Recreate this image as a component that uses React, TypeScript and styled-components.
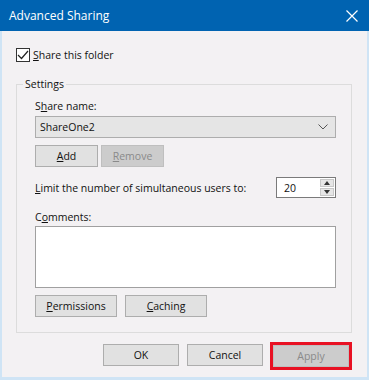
import React from "react";
import styled, { createGlobalStyle } from "styled-components";

const Global = createGlobalStyle`
  html, body { margin: 0; padding: 0; background: #ffffff; }
  body { font-family: "Open Sans", "Liberation Sans", Arial, sans-serif; font-size: 10.5px; color: #111; }
  * { box-sizing: border-box; }
`;

const Window = styled.div`
  width: 369px;
  height: 380px;
  display: flex;
  flex-direction: column;
  background: #f3f1f3;
  border-left: 2px solid #cfe4f5;
  border-right: 2px solid #cfe4f5;
  border-bottom: 3px solid #cfe4f5;
`;

const TitleBar = styled.div`
  height: 31px;
  margin: 0 -2px;
  background: #0063b1;
  color: #fff;
  display: flex;
  align-items: center;
  justify-content: space-between;
  padding: 0 11px 0 9px;
  font-size: 12px;
  flex-shrink: 0;
`;

const Body = styled.div`
  flex: 1;
  display: flex;
  flex-direction: column;
  padding: 17px 15px 0 14px;
`;

const CheckRow = styled.label`
  display: flex;
  align-items: center;
  gap: 3px;
  height: 14px;
`;

const CheckBox = styled.span`
  width: 14px;
  height: 14px;
  border: 1px solid #333;
  background: #fff;
  display: flex;
  align-items: center;
  justify-content: center;
`;

const U = styled.span`
  text-decoration: underline;
  text-underline-offset: 1px;
`;

const Group = styled.fieldset`
  margin: 16px 0 0 0;
  padding: 9px 15px 15px 18px;
  border: 1px solid #dcdcdc;
  display: flex;
  flex-direction: column;
  min-width: 0;
`;

const Legend = styled.legend`
  padding: 0 2px;
  margin-left: -12px;
  line-height: 12px;
`;

const Label = styled.div<{ $mt?: number }>`
  margin-top: ${(p) => p.$mt ?? 0}px;
  line-height: 15px;
`;

const Combo = styled.div`
  margin-top: 2px;
  height: 22px;
  background: #e5e5e5;
  border: 1px solid #adadad;
  display: flex;
  align-items: center;
  justify-content: space-between;
  padding: 0 7px 0 4px;
`;

const Row = styled.div<{ $mt?: number; $gap?: number }>`
  display: flex;
  align-items: center;
  margin-top: ${(p) => p.$mt ?? 0}px;
  gap: ${(p) => p.$gap ?? 0}px;
`;

const Button = styled.div<{ $w: number; $disabled?: boolean }>`
  width: ${(p) => p.$w}px;
  height: 22px;
  display: flex;
  align-items: center;
  justify-content: center;
  background: ${(p) => (p.$disabled ? "#cccccc" : "#e1e1e1")};
  border: 1px solid ${(p) => (p.$disabled ? "#bfbfbf" : "#adadad")};
  color: ${(p) => (p.$disabled ? "#8a8a8a" : "#111")};
`;

const Spin = styled.div`
  margin-left: auto;
  width: 60px;
  height: 21px;
  border: 1px solid #7a7a7a;
  background: #fff;
  display: flex;
`;

const SpinText = styled.div`
  flex: 1;
  padding-left: 7px;
  display: flex;
  align-items: center;
`;

const SpinArrows = styled.div`
  width: 16px;
  display: flex;
  flex-direction: column;
  padding: 1px;
  gap: 1px;
`;

const SpinBtn = styled.div`
  flex: 1;
  background: #e6e6e6;
  border: 1px solid #c8c8c8;
  display: flex;
  align-items: center;
  justify-content: center;
`;

const TextArea = styled.div`
  margin-top: 1px;
  height: 62px;
  background: #fff;
  border: 1px solid #a0a0a0;
`;

const Footer = styled.div`
  display: flex;
  justify-content: flex-end;
  gap: 8px;
  margin-top: 11px;
  padding-right: 2px;
`;

const Highlight = styled.div`
  border: 3px solid #e81123;
  margin: -2px -2px -2px -1px;
  display: flex;
`;

export default function App() {
  return (
    <>
      <Global />
      <Window>
        <TitleBar>
          <span>Advanced Sharing</span>
          <svg width="12" height="12" viewBox="0 0 12 12">
            <path d="M0.5 0.5 L11.5 11.5 M11.5 0.5 L0.5 11.5" stroke="#fff" strokeWidth="1.2" />
          </svg>
        </TitleBar>
        <Body>
          <CheckRow>
            <CheckBox>
              <svg width="12" height="10" viewBox="0 0 12 10">
                <path d="M1 5 L4.5 8.5 L11 1" stroke="#222" strokeWidth="1.2" fill="none" />
              </svg>
            </CheckBox>
            <span>
              <U>S</U>hare this folder
            </span>
          </CheckRow>
          <Group>
            <Legend>Settings</Legend>
            <Label>
              S<U>h</U>are name:
            </Label>
            <Combo>
              <span>ShareOne2</span>
              <svg width="10" height="6" viewBox="0 0 10 6">
                <path d="M0.5 0.5 L5 5 L9.5 0.5" stroke="#555" strokeWidth="1" fill="none" />
              </svg>
            </Combo>
            <Row $mt={7} $gap={3}>
              <Button $w={63}>
                <span>
                  <U>A</U>dd
                </span>
              </Button>
              <Button $w={63} $disabled>
                <span>
                  <U>R</U>emove
                </span>
              </Button>
            </Row>
            <Row $mt={10}>
              <span>
                <U>L</U>imit the number of simultaneous users to:
              </span>
              <Spin>
                <SpinText>20</SpinText>
                <SpinArrows>
                  <SpinBtn>
                    <svg width="6" height="4" viewBox="0 0 6 4">
                      <path d="M0 4 L3 0 L6 4 Z" fill="#333" />
                    </svg>
                  </SpinBtn>
                  <SpinBtn>
                    <svg width="6" height="4" viewBox="0 0 6 4">
                      <path d="M0 0 L3 4 L6 0 Z" fill="#333" />
                    </svg>
                  </SpinBtn>
                </SpinArrows>
              </Spin>
            </Row>
            <Label $mt={12}>
              C<U>o</U>mments:
            </Label>
            <TextArea />
            <Row $mt={7} $gap={8}>
              <Button $w={82}>
                <span>
                  <U>P</U>ermissions
                </span>
              </Button>
              <Button $w={82}>
                <span>
                  <U>C</U>aching
                </span>
              </Button>
            </Row>
          </Group>
          <Footer>
            <Button $w={76}>OK</Button>
            <Button $w={76}>Cancel</Button>
            <Highlight>
              <Button $w={76} $disabled>
                Apply
              </Button>
            </Highlight>
          </Footer>
        </Body>
      </Window>
    </>
  );
}
